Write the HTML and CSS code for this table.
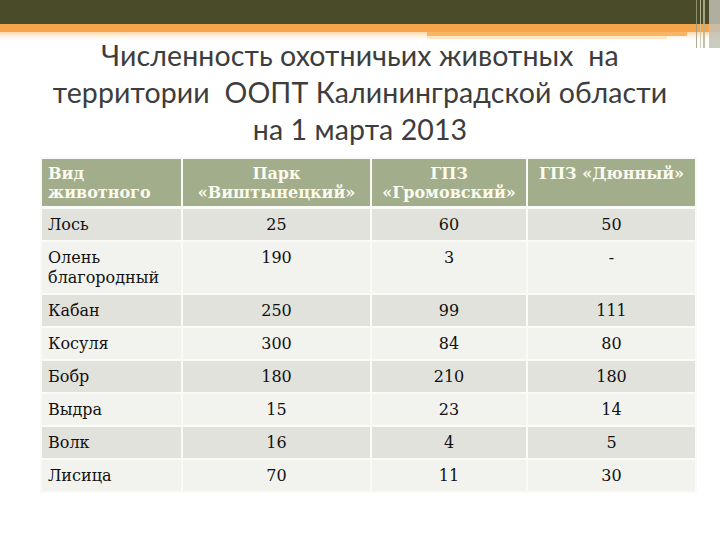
FILE: index.html
```html
<!DOCTYPE html>
<html lang="ru">
<head>
<meta charset="utf-8">
<title>Численность охотничьих животных</title>
<link rel="stylesheet" href="styles.css">
</head>
<body>
<div class="banner">
  <div class="band-dark"></div>
  <div class="band-orange"></div>
  <div class="band-pale"></div>
  <div class="vstripes"></div>
</div>
<h1 class="title">Численность охотничьих животных&nbsp; на<br>территории&nbsp; ООПТ Калининградской области<br>на 1 марта 2013</h1>
<table class="data">
  <colgroup>
    <col class="c1"><col class="c2"><col class="c3"><col class="c4">
  </colgroup>
  <thead>
    <tr><th class="left">Вид<br>животного</th><th>Парк<br>«Виштынецкий»</th><th>ГПЗ<br>«Громовский»</th><th>ГПЗ «Дюнный»</th></tr>
  </thead>
  <tbody>
    <tr class="odd"><td class="left">Лось</td><td>25</td><td>60</td><td>50</td></tr>
    <tr class="even"><td class="left">Олень<br>благородный</td><td>190</td><td>3</td><td>-</td></tr>
    <tr class="odd"><td class="left">Кабан</td><td>250</td><td>99</td><td>111</td></tr>
    <tr class="even"><td class="left">Косуля</td><td>300</td><td>84</td><td>80</td></tr>
    <tr class="odd"><td class="left">Бобр</td><td>180</td><td>210</td><td>180</td></tr>
    <tr class="even"><td class="left">Выдра</td><td>15</td><td>23</td><td>14</td></tr>
    <tr class="odd"><td class="left">Волк</td><td>16</td><td>4</td><td>5</td></tr>
    <tr class="even"><td class="left">Лисица</td><td>70</td><td>11</td><td>30</td></tr>
  </tbody>
</table>
</body>
</html>
```
FILE: styles.css
```css
html, body {
  margin: 0;
  padding: 0;
  background: #ffffff;
}
body {
  width: 720px;
  height: 540px;
  overflow: hidden;
}
.banner {
  position: relative;
  height: 42px;
}
.band-dark {
  height: 24px;
  background: #4a4b28;
}
.band-orange {
  height: 8px;
  background: #f7a54a;
}
.band-pale {
  height: 8px;
  background:
    linear-gradient(to bottom, transparent 0, transparent 4px, #fbe7c4 4px, #fbe7c4 7px, transparent 7px) 427px 0 / 240px 100% no-repeat,
    linear-gradient(to bottom, #f8b565 0, #f8b565 4px, transparent 4px) 427px 0 / 260px 100% no-repeat,
    linear-gradient(to bottom, #fbd6a8 0, #fcebd2 3px, #fff6ea 5px, #ffffff 8px);
}
.vstripes {
  position: absolute;
  top: 0;
  right: 0;
  width: 28px;
  height: 48px;
  background: linear-gradient(to right,
    transparent 0, transparent 4px,
    #9c9b82 4px, #9c9b82 5px,
    transparent 5px, transparent 8px,
    #c9c5a6 8px, #c9c5a6 9px,
    transparent 9px, transparent 11px,
    #b6b49a 11px, #b6b49a 13px,
    transparent 13px, transparent 17px,
    #c2c1b4 17px, #c2c1b4 28px);
  opacity: 0.85;
}
.title {
  margin: -5px 0 0 0;
  text-align: center;
  font-family: Lato, "Open Sans", sans-serif;
  font-weight: 400;
  font-size: 28.5px;
  line-height: 37px;
  color: #3d3d3d;
  letter-spacing: 0.1px;
}
.data {
  margin: 9px 0 0 40px;
  border-collapse: collapse;
  table-layout: fixed;
  width: 655px;
  font-family: "DejaVu Serif", "Liberation Serif", serif;
  font-size: 16px;
  color: #111111;
}
.c1 { width: 141px; }
.c2 { width: 189px; }
.c3 { width: 156px; }
.c4 { width: 169px; }
.data th, .data td {
  border: 2px solid #fafaf6;
  padding: 6px 6px 5px 6px;
  line-height: 20px;
  vertical-align: top;
  text-align: center;
}
.data th {
  background: #a2ad8c;
  color: #fbfbee;
  font-weight: bold;
  line-height: 19px;
  padding: 5px 2px 4px 2px;
  border-bottom-width: 3px;
}
.data .left {
  text-align: left;
  padding-left: 6px;
}
.odd td { background: #e2e2dc; }
.even td { background: #f2f2ee; }
```
